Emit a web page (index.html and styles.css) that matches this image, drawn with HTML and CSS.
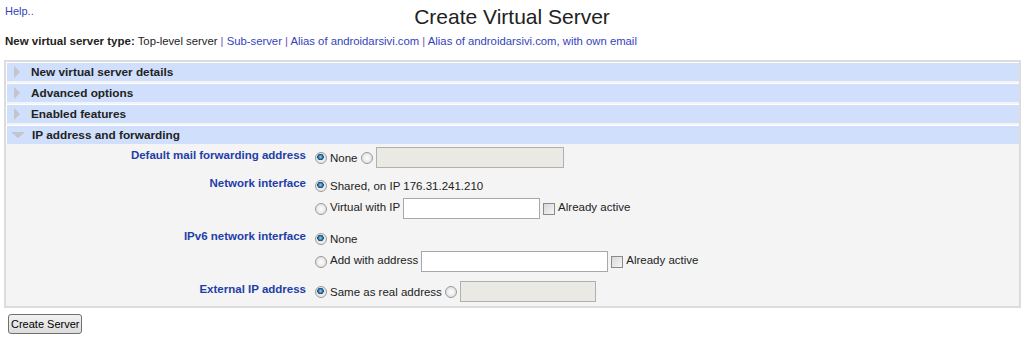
FILE: index.html
```html
<!DOCTYPE html>
<html lang="en">
<head>
    <meta charset="UTF-8">
    <title>Create Virtual Server</title>
    <link rel="stylesheet" href="styles.css">
</head>
<body>
    <div class="top">
        <a class="help" href="#">Help..</a>
        <h1>Create Virtual Server</h1>
    </div>
    <div class="types">
        <b>New virtual server type:</b> Top-level server <span class="sep">|</span>
        <a href="#">Sub-server</a> <span class="sep">|</span>
        <a href="#">Alias of androidarsivi.com</a> <span class="sep">|</span>
        <a href="#">Alias of androidarsivi.com, with own email</a>
    </div>

    <div class="panel">
        <div class="section"><span class="arrow right"></span>New virtual server details</div>
        <div class="section"><span class="arrow right"></span>Advanced options</div>
        <div class="section"><span class="arrow right"></span>Enabled features</div>
        <div class="section"><span class="arrow down"></span>IP address and forwarding</div>

        <table class="form">
            <tr class="first">
                <td class="label">Default mail forwarding address</td>
                <td>
                    <div class="line"><input type="radio" name="fwd" checked><span class="opt">None</span><input type="radio" name="fwd"><input type="text" class="box disabled w188" disabled></div>
                </td>
            </tr>
            <tr>
                <td class="label">Network interface</td>
                <td>
                    <div class="line"><input type="radio" name="net" checked><span class="opt">Shared, on IP 176.31.241.210</span></div>
                    <div class="line"><input type="radio" name="net"><span class="opt">Virtual with IP</span><input type="text" class="box w137"><input type="checkbox"><span class="opt">Already active</span></div>
                </td>
            </tr>
            <tr>
                <td class="label">IPv6 network interface</td>
                <td>
                    <div class="line"><input type="radio" name="ip6" checked><span class="opt">None</span></div>
                    <div class="line"><input type="radio" name="ip6"><span class="opt">Add with address</span><input type="text" class="box w187"><input type="checkbox"><span class="opt">Already active</span></div>
                </td>
            </tr>
            <tr class="last">
                <td class="label">External IP address</td>
                <td>
                    <div class="line"><input type="radio" name="ext" checked><span class="opt">Same as real address</span><input type="radio" name="ext"><input type="text" class="box disabled w136" disabled></div>
                </td>
            </tr>
        </table>
    </div>

    <button class="submit">Create Server</button>
</body>
</html>
```

FILE: styles.css
```css
body {
    margin: 0;
    padding: 0 3px;
    font-family: "Liberation Sans", Arial, sans-serif;
    font-size: 12px;
    color: #222;
    background: #fff;
}

a {
    color: #3344bb;
    text-decoration: none;
}

.top {
    position: relative;
    height: 33px;
}

.help {
    position: absolute;
    left: 2px;
    top: 5px;
    font-size: 11px;
}

h1 {
    margin: 0;
    padding-top: 5px;
    text-align: center;
    font-weight: normal;
    font-size: 21px;
    color: #222;
}

.types {
    padding-left: 2px;
    height: 27px;
    line-height: 16px;
    font-size: 11.3px;
}

.types b {
    font-size: 11.5px;
    color: #222;
}

.sep {
    color: #7a4fa8;
}

.panel {
    margin: 0 0 0 1px;
    width: 1013px;
    border: 2px solid #dcdcdc;
    background: #f4f4f4;
    padding: 0 0 4px;
}

.section {
    background: #cfdffc;
    border-top: 1px solid #fff;
    border-left: 1px solid #fff;
    margin-bottom: 2px;
    height: 18px;
    line-height: 18px;
    font-weight: bold;
    font-size: 11.8px;
    color: #222;
    display: flex;
    align-items: center;
}

.arrow {
    width: 0;
    height: 0;
}

.arrow.right {
    border-top: 6px solid transparent;
    border-bottom: 6px solid transparent;
    border-left: 6px solid #c4c4cc;
    margin: 0 11px 0 7px;
}

.arrow.down {
    border-left: 7px solid transparent;
    border-right: 7px solid transparent;
    border-top: 6px solid #c4c4cc;
    margin: 0 7px 0 4px;
}

.form {
    border-collapse: collapse;
    font-size: 11.5px;
}

.form td {
    vertical-align: top;
    padding: 0 0 9px;
}

.form tr.first td {
    padding-bottom: 6px;
}

.form tr.last td {
    padding-bottom: 0;
}

.form td.label {
    width: 300px;
    text-align: right;
    font-weight: bold;
    color: #1f3ea8;
    padding-top: 2px;
    padding-right: 8px;
    line-height: 14px;
}

.line {
    height: 22px;
    line-height: 22px;
    white-space: nowrap;
}

.opt {
    vertical-align: middle;
    margin-right: 3px;
}

.line + .line .opt {
    vertical-align: 1px;
}

input[type="radio"],
input[type="checkbox"] {
    -webkit-appearance: none;
    appearance: none;
    vertical-align: middle;
    box-sizing: border-box;
    width: 12px;
    height: 12px;
    margin: 0 3px 0 0;
    border: 1px solid #9a9a9a;
    background: radial-gradient(circle at 50% 50%, #fff 0, #e4e4e4 70%, #d8d8d8 100%);
}

input[type="radio"] {
    border-radius: 50%;
}

input[type="radio"]:first-child {
    margin-left: 1px;
}

input[type="radio"]:checked {
    background: radial-gradient(circle at 45% 40%, #9fd3f0 0, #2a7cb0 2px, #123f66 3px, #e8e8e8 3.5px, #f2f2f2 100%);
}

input[type="checkbox"] {
    border-radius: 0;
    border-color: #8a8a8a;
    background: linear-gradient(135deg, #d8d8d8, #f6f6f6);
    margin: 0 3px 0 3px;
}

.box {
    vertical-align: middle;
    height: 21px;
    box-sizing: border-box;
    border: 1px solid #a8a8a8;
    background: #fff;
    margin: 0;
    padding: 1px 3px;
    font: inherit;
}

.box.disabled {
    background: #ebe9e3;
    border-color: #b0b0b0;
}

.w188 { width: 188px; }
.w137 { width: 137px; }
.w187 { width: 187px; }
.w136 { width: 136px; }

.submit {
    margin: 6px 0 0 5px;
    font-family: "Liberation Sans", Arial, sans-serif;
    font-size: 11px;
    padding: 1px 2px;
    height: 20px;
    border: 1px solid #707070;
    border-radius: 3px;
    background: linear-gradient(#f2f2f2, #dcdcdc);
    color: #000;
}
```
